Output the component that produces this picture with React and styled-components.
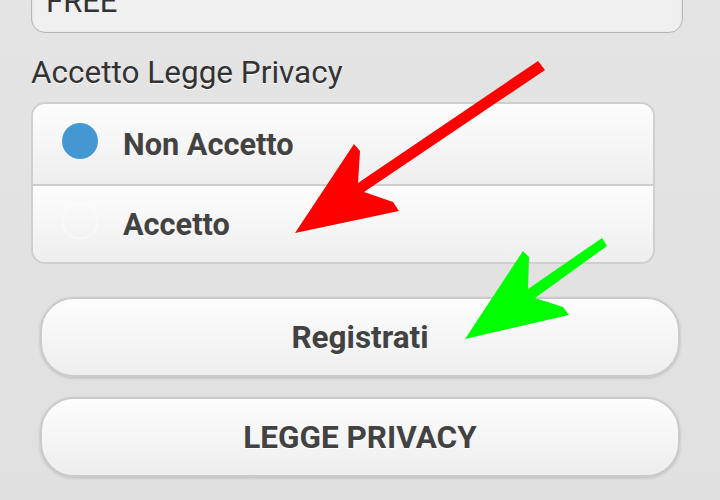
import React from "react";
import styled, { createGlobalStyle } from "styled-components";

const Global = createGlobalStyle`
  html, body { margin: 0; padding: 0; }
  body {
    background: linear-gradient(#e4e4e4, #e0e0e0);
    width: 720px;
    height: 500px;
    overflow: hidden;
    font-family: Roboto, "Noto Sans", sans-serif;
  }
`;

const Page = styled.div`
  position: relative;
  width: 720px;
  height: 500px;
  overflow: hidden;
  box-sizing: border-box;
  padding: 0 0 0 31px;
  display: flex;
  flex-direction: column;
  align-items: flex-start;
`;

const Field = styled.div`
  box-sizing: border-box;
  width: 652px;
  height: 64px;
  margin-top: -31px;
  border: 1.5px solid #b4b4b4;
  border-radius: 14px;
  background: #f0f0f0;
  box-shadow: inset 0 1px 3px rgba(0, 0, 0, 0.12);
  display: flex;
  align-items: center;
  padding-left: 14px;
  font-size: 31px;
  line-height: 1;
  color: #333;
`;

const Label = styled.div`
  margin-top: 23px;
  font-size: 31.5px;
  line-height: 34px;
  color: #333;
  text-shadow: 0 1px 0 #fff;
`;

const Group = styled.div`
  box-sizing: border-box;
  margin-top: 12px;
  width: 624px;
  border: 2px solid #cfcfcf;
  border-radius: 14px;
  overflow: hidden;
  display: flex;
  flex-direction: column;
`;

const Row = styled.div`
  box-sizing: border-box;
  height: ${(p) => p.$h}px;
  display: flex;
  align-items: center;
  padding-left: 29px;
  gap: 25px;
  background: linear-gradient(#fdfdfd, #eeeeee);
  border-top: ${(p) => (p.$first ? "none" : "2px solid #cdcdcd")};
`;

const Dot = styled.span`
  flex: none;
  width: 36px;
  height: 36px;
  border-radius: 50%;
  margin-top: -6px;
  box-sizing: border-box;
  background: ${(p) => (p.$on ? "#4597d2" : "transparent")};
  border: ${(p) => (p.$on ? "none" : "1px solid rgba(255,255,255,0.7)")};
`;

const RowText = styled.span`
  font-size: 30.7px;
  font-weight: 700;
  color: #424242;
  text-shadow: 0 1px 0 #fff;
`;

const Button = styled.div`
  box-sizing: border-box;
  margin-left: 9px;
  margin-top: ${(p) => p.$mt}px;
  width: 640px;
  height: 80px;
  border: 2px solid #cacaca;
  border-radius: 34px;
  background: linear-gradient(#fdfdfd, #eeeeee);
  box-shadow: 0 1px 3px rgba(0, 0, 0, 0.18);
  display: flex;
  align-items: center;
  justify-content: center;
  font-size: 31.5px;
  font-weight: 700;
  color: #424242;
  text-shadow: 0 1px 0 #fff;
`;

const Overlay = styled.svg`
  position: absolute;
  left: 0;
  top: 0;
  width: 720px;
  height: 500px;
  pointer-events: none;
`;

export default function App() {
  return (
    <>
      <Global />
      <Page>
        <Field>FREE</Field>
        <Label>Accetto Legge Privacy</Label>
        <Group>
          <Row $first $h={80}>
            <Dot $on />
            <RowText>Non Accetto</RowText>
          </Row>
          <Row $h={78}>
            <Dot />
            <RowText>Accetto</RowText>
          </Row>
        </Group>
        <Button $mt={33}>Registrati</Button>
        <Button $mt={20}>LEGGE PRIVACY</Button>
        <Overlay viewBox="0 0 720 500">
          <polygon
            fill="#ff0000"
            points="295,233 354,144 360,151 358,183 538,61 545,70 364,192 393,202 399,211"
          />
          <polygon
            fill="#00ff00"
            points="465,339 523,251 529,257 528,289 602,238 607,246 535,298 563,307 569,315"
          />
        </Overlay>
      </Page>
    </>
  );
}
